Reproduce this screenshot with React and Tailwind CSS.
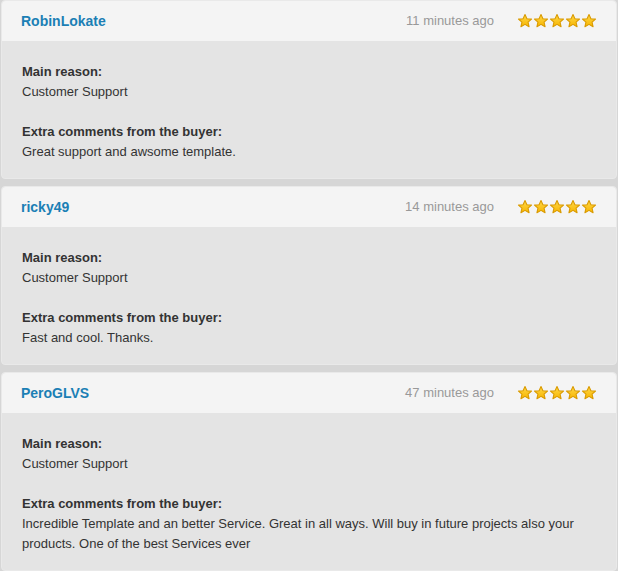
const reviews = [
  {
    user: 'RobinLokate',
    time: '11 minutes ago',
    reason: 'Customer Support',
    comment: 'Great support and awsome template.',
  },
  {
    user: 'ricky49',
    time: '14 minutes ago',
    reason: 'Customer Support',
    comment: 'Fast and cool. Thanks.',
  },
  {
    user: 'PeroGLVS',
    time: '47 minutes ago',
    reason: 'Customer Support',
    comment:
      'Incredible Template and an better Service. Great in all ways. Will buy in future projects also your products. One of the best Services ever',
  },
];

function Star() {
  return (
    <svg width="16" height="16" viewBox="0 0 24 24">
      <defs>
        <linearGradient id="starFill" x1="0" y1="0" x2="0" y2="1">
          <stop offset="0" stopColor="#ffd94a" />
          <stop offset="1" stopColor="#f7b500" />
        </linearGradient>
      </defs>
      <path
        d="M12 2.2l2.9 6.3 6.9.7-5.2 4.6 1.5 6.8L12 17.1l-6.1 3.5 1.5-6.8-5.2-4.6 6.9-.7z"
        fill="url(#starFill)"
        stroke="#d99a00"
        strokeWidth="1.6"
        strokeLinejoin="round"
      />
    </svg>
  );
}

function ReviewCard({ review }) {
  return (
    <div className="rounded-[4px] border border-[#e9e9e9] bg-[#e4e4e4]">
      <div className="flex h-[40px] items-center rounded-t-[4px] bg-[#f4f4f4] pl-[19px] pr-[19px]">
        <span className="text-[14px] font-bold text-[#1b7fb5]">{review.user}</span>
        <span className="ml-auto text-[13px] text-[#999999]">{review.time}</span>
        <div className="ml-[23px] flex">
          {[0, 1, 2, 3, 4].map((i) => (
            <Star key={i} />
          ))}
        </div>
      </div>
      <div className="px-[20px] pb-[16px] pt-[21px] text-[13px] leading-[20px] text-[#333333]">
        <div className="font-bold">Main reason:</div>
        <div>{review.reason}</div>
        <div className="mt-[20px] font-bold">Extra comments from the buyer:</div>
        <div>{review.comment}</div>
      </div>
    </div>
  );
}

export default function App() {
  return (
    <div
      className="flex min-h-[571px] flex-col gap-[7px] bg-[#d6d6d6] px-[1px]"
      style={{ fontFamily: '"Liberation Sans", Arial, sans-serif' }}
    >
      {reviews.map((r) => (
        <ReviewCard key={r.user} review={r} />
      ))}
    </div>
  );
}
